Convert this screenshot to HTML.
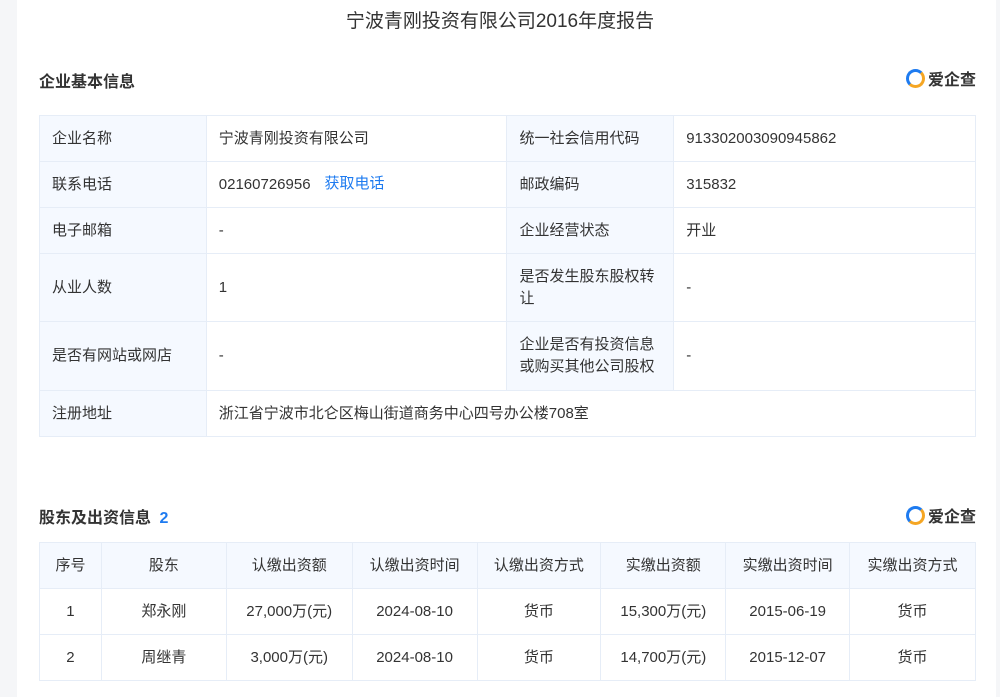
<!DOCTYPE html>
<html><head><meta charset="utf-8"><style>
body{margin:0;width:1000px;height:697px;background:#f5f6f8;font-family:"Liberation Sans","Noto Sans CJK SC",sans-serif;overflow:hidden;position:relative}
.panel{position:absolute;left:17px;top:0;width:979px;height:697px;background:#fff}
.title{position:absolute;left:0;width:1000px;top:6px;text-align:center;font-size:19px;color:#333}
.h{position:absolute;left:39px;font-size:16px;font-weight:bold;color:#333}
.logo{position:absolute;left:906px;font-size:16px;font-weight:bold;color:#333;display:flex;align-items:center}
.logo i{display:inline-block;border:3px solid #1e7bf0;border-radius:50%;border-right-color:#f5a623;border-bottom-color:#f5a623;margin-right:3px;width:13px;height:13px}
table{position:absolute;left:39px;border-collapse:collapse;font-size:15px;color:#333}
td{border:1px solid #e6edf7;padding:0 0 0 12px;line-height:22px;vertical-align:middle}
td span.n{display:inline-block;vertical-align:top;line-height:24px}
td.l{background:#f5f9ff}
.t2 td{text-align:center;padding:0}
.t2 tr:first-child td{background:#f5f9ff}
a{color:#1e7bf0;text-decoration:none;margin-left:14px}
</style></head><body>
<div class="panel"></div>
<div class="title">宁波青刚投资有限公司2016年度报告</div>
<div class="h" style="top:68px">企业基本信息</div>
<div class="logo" style="top:66px"><i></i>爱企查</div>
<table style="top:115px;width:937px">
<col style="width:167px"><col style="width:301px"><col style="width:167px"><col style="width:302px">
<tr style="height:46px"><td class="l">企业名称</td><td>宁波青刚投资有限公司</td><td class="l">统一社会信用代码</td><td><span class="n">913302003090945862</span></td></tr>
<tr style="height:46px"><td class="l">联系电话</td><td><span class="n">02160726956</span><a>获取电话</a></td><td class="l">邮政编码</td><td><span class="n">315832</span></td></tr>
<tr style="height:46px"><td class="l">电子邮箱</td><td><span class="n">-</span></td><td class="l">企业经营状态</td><td>开业</td></tr>
<tr style="height:68px"><td class="l">从业人数</td><td><span class="n">1</span></td><td class="l">是否发生股东股权转<br>让</td><td><span class="n">-</span></td></tr>
<tr style="height:69px"><td class="l">是否有网站或网店</td><td><span class="n">-</span></td><td class="l">企业是否有投资信息<br>或购买其他公司股权</td><td><span class="n">-</span></td></tr>
<tr style="height:46px"><td class="l">注册地址</td><td colspan="3">浙江省宁波市北仑区梅山街道商务中心四号办公楼708室</td></tr>
</table>
<div class="h" style="top:504px">股东及出资信息 <span style="color:#1e7bf0;margin-left:4px">2</span></div>
<div class="logo" style="top:503px"><i></i>爱企查</div>
<table class="t2" style="top:542px;width:937px">
<col style="width:62px"><col style="width:125px"><col style="width:126px"><col style="width:125px"><col style="width:124px"><col style="width:125px"><col style="width:124px"><col style="width:126px">
<tr style="height:46px"><td>序号</td><td>股东</td><td>认缴出资额</td><td>认缴出资时间</td><td>认缴出资方式</td><td>实缴出资额</td><td>实缴出资时间</td><td>实缴出资方式</td></tr>
<tr style="height:46px"><td><span class="n">1</span></td><td>郑永刚</td><td>27,000万(元)</td><td><span class="n">2024-08-10</span></td><td>货币</td><td>15,300万(元)</td><td><span class="n">2015-06-19</span></td><td>货币</td></tr>
<tr style="height:46px"><td><span class="n">2</span></td><td>周继青</td><td>3,000万(元)</td><td><span class="n">2024-08-10</span></td><td>货币</td><td>14,700万(元)</td><td><span class="n">2015-12-07</span></td><td>货币</td></tr>
</table>
</body></html>
